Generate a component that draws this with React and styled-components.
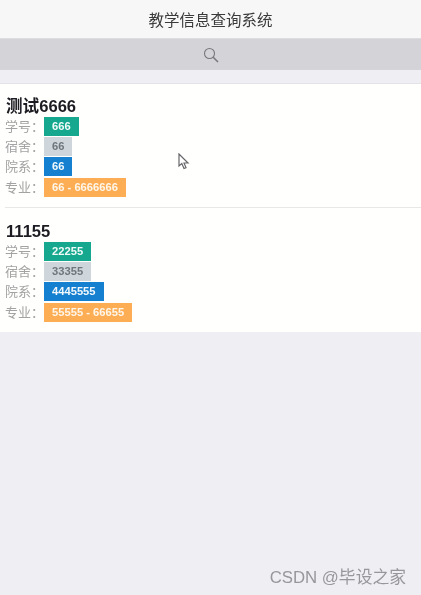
import React from "react";
import styled, { createGlobalStyle } from "styled-components";

const students = [
  { id: 1, name: "测试6666", no: "666", dorm: "66", dept: "66", major: "66 - 6666666" },
  { id: 2, name: "11155", no: "22255", dorm: "33355", dept: "4445555", major: "55555 - 66655" },
];

const GlobalStyle = createGlobalStyle`
  html, body {
    margin: 0;
    padding: 0;
    height: 100%;
    background: #eeeef3;
    font-family: "Liberation Sans", "Noto Sans CJK SC", sans-serif;
  }
`;

const App = () => {
  return (
    <Page>
      <GlobalStyle />
      <Header>教学信息查询系统</Header>
      <SearchBar>
        <svg width="16" height="16" viewBox="0 0 16 16" fill="none" stroke="#77777b" strokeWidth="1.1">
          <circle cx="6.5" cy="6.5" r="5" />
          <path d="M10.2 10.2 L15 15" strokeWidth="1.5" />
        </svg>
      </SearchBar>
      <List>
        {students.map((s) => (
          <Item key={s.id}>
            <Name>{s.name}</Name>
            <Row>
              <Label>学号：</Label>
              <Tag $kind="primary">{s.no}</Tag>
            </Row>
            <Row>
              <Label>宿舍：</Label>
              <Tag $kind="muted">{s.dorm}</Tag>
            </Row>
            <Row>
              <Label>院系：</Label>
              <Tag $kind="info">{s.dept}</Tag>
            </Row>
            <Row>
              <Label>专业：</Label>
              <Tag $kind="warning">{s.major}</Tag>
            </Row>
          </Item>
        ))}
      </List>
      <Cursor width="12" height="18" viewBox="0 0 12 18">
        <path d="M1 1 L1 13 L3.8 10.6 L6 15.5 L8 14.6 L6 10 L10 10 Z" fill="#fff" stroke="#66666a" strokeWidth="1.2" />
      </Cursor>
      <Watermark>CSDN @毕设之家</Watermark>
    </Page>
  );
};

const tagColors = {
  primary: "background: #16a78f; color: #f1fbf8;",
  muted: "background: #ced6dc; color: #6f767c;",
  info: "background: #1580cf; color: #f2f8fd;",
  warning: "background: #fdae55; color: #fff6ea;",
};

const Page = styled.div`
  position: relative;
  min-height: 595px;
  overflow: hidden;
  background: #eeeef3;
  filter: blur(0.4px);
`;

const Header = styled.div`
  height: 38px;
  display: flex;
  align-items: center;
  justify-content: center;
  background: #f7f7f7;
  border-bottom: 1px solid #dcdcdf;
  color: #3a3a3a;
  font-size: 15.5px;
`;

const SearchBar = styled.div`
  height: 31px;
  display: flex;
  align-items: center;
  justify-content: center;
  background: #d4d4d8;
`;

const List = styled.div`
  margin-top: 13px;
  padding-left: 5px;
  background: #fffffd;
  border-top: 1px solid #e4e4e8;
`;

const Item = styled.div`
  padding: 13px 5px 0 0;
  height: 124px;
  box-sizing: border-box;
  border-bottom: 1px solid #e8e8e8;

  &:last-child {
    border-bottom: none;
    padding-top: 14px;
  }
`;

const Name = styled.div`
  height: 20px;
  line-height: 20px;
  margin-bottom: -1px;
  padding-left: 1px;
  font-size: 16.6px;
  font-weight: bold;
  color: #1c1c22;
`;

const Row = styled.div`
  display: flex;
  align-items: center;
  height: 20.3px;
`;

const Label = styled.span`
  width: 39px;
  font-size: 13px;
  line-height: 17px;
  color: #a3a3a3;
`;

const Tag = styled.span`
  height: 19px;
  line-height: 19px;
  padding: 0 8px;
  font-size: 11.2px;
  font-weight: bold;
  ${(props) => tagColors[props.$kind]}
`;

const Cursor = styled.svg`
  position: absolute;
  left: 178px;
  top: 153px;
`;

const Watermark = styled.div`
  position: absolute;
  right: 15px;
  top: 564px;
  font-size: 16.8px;
  color: #97979b;
`;

export default App;
